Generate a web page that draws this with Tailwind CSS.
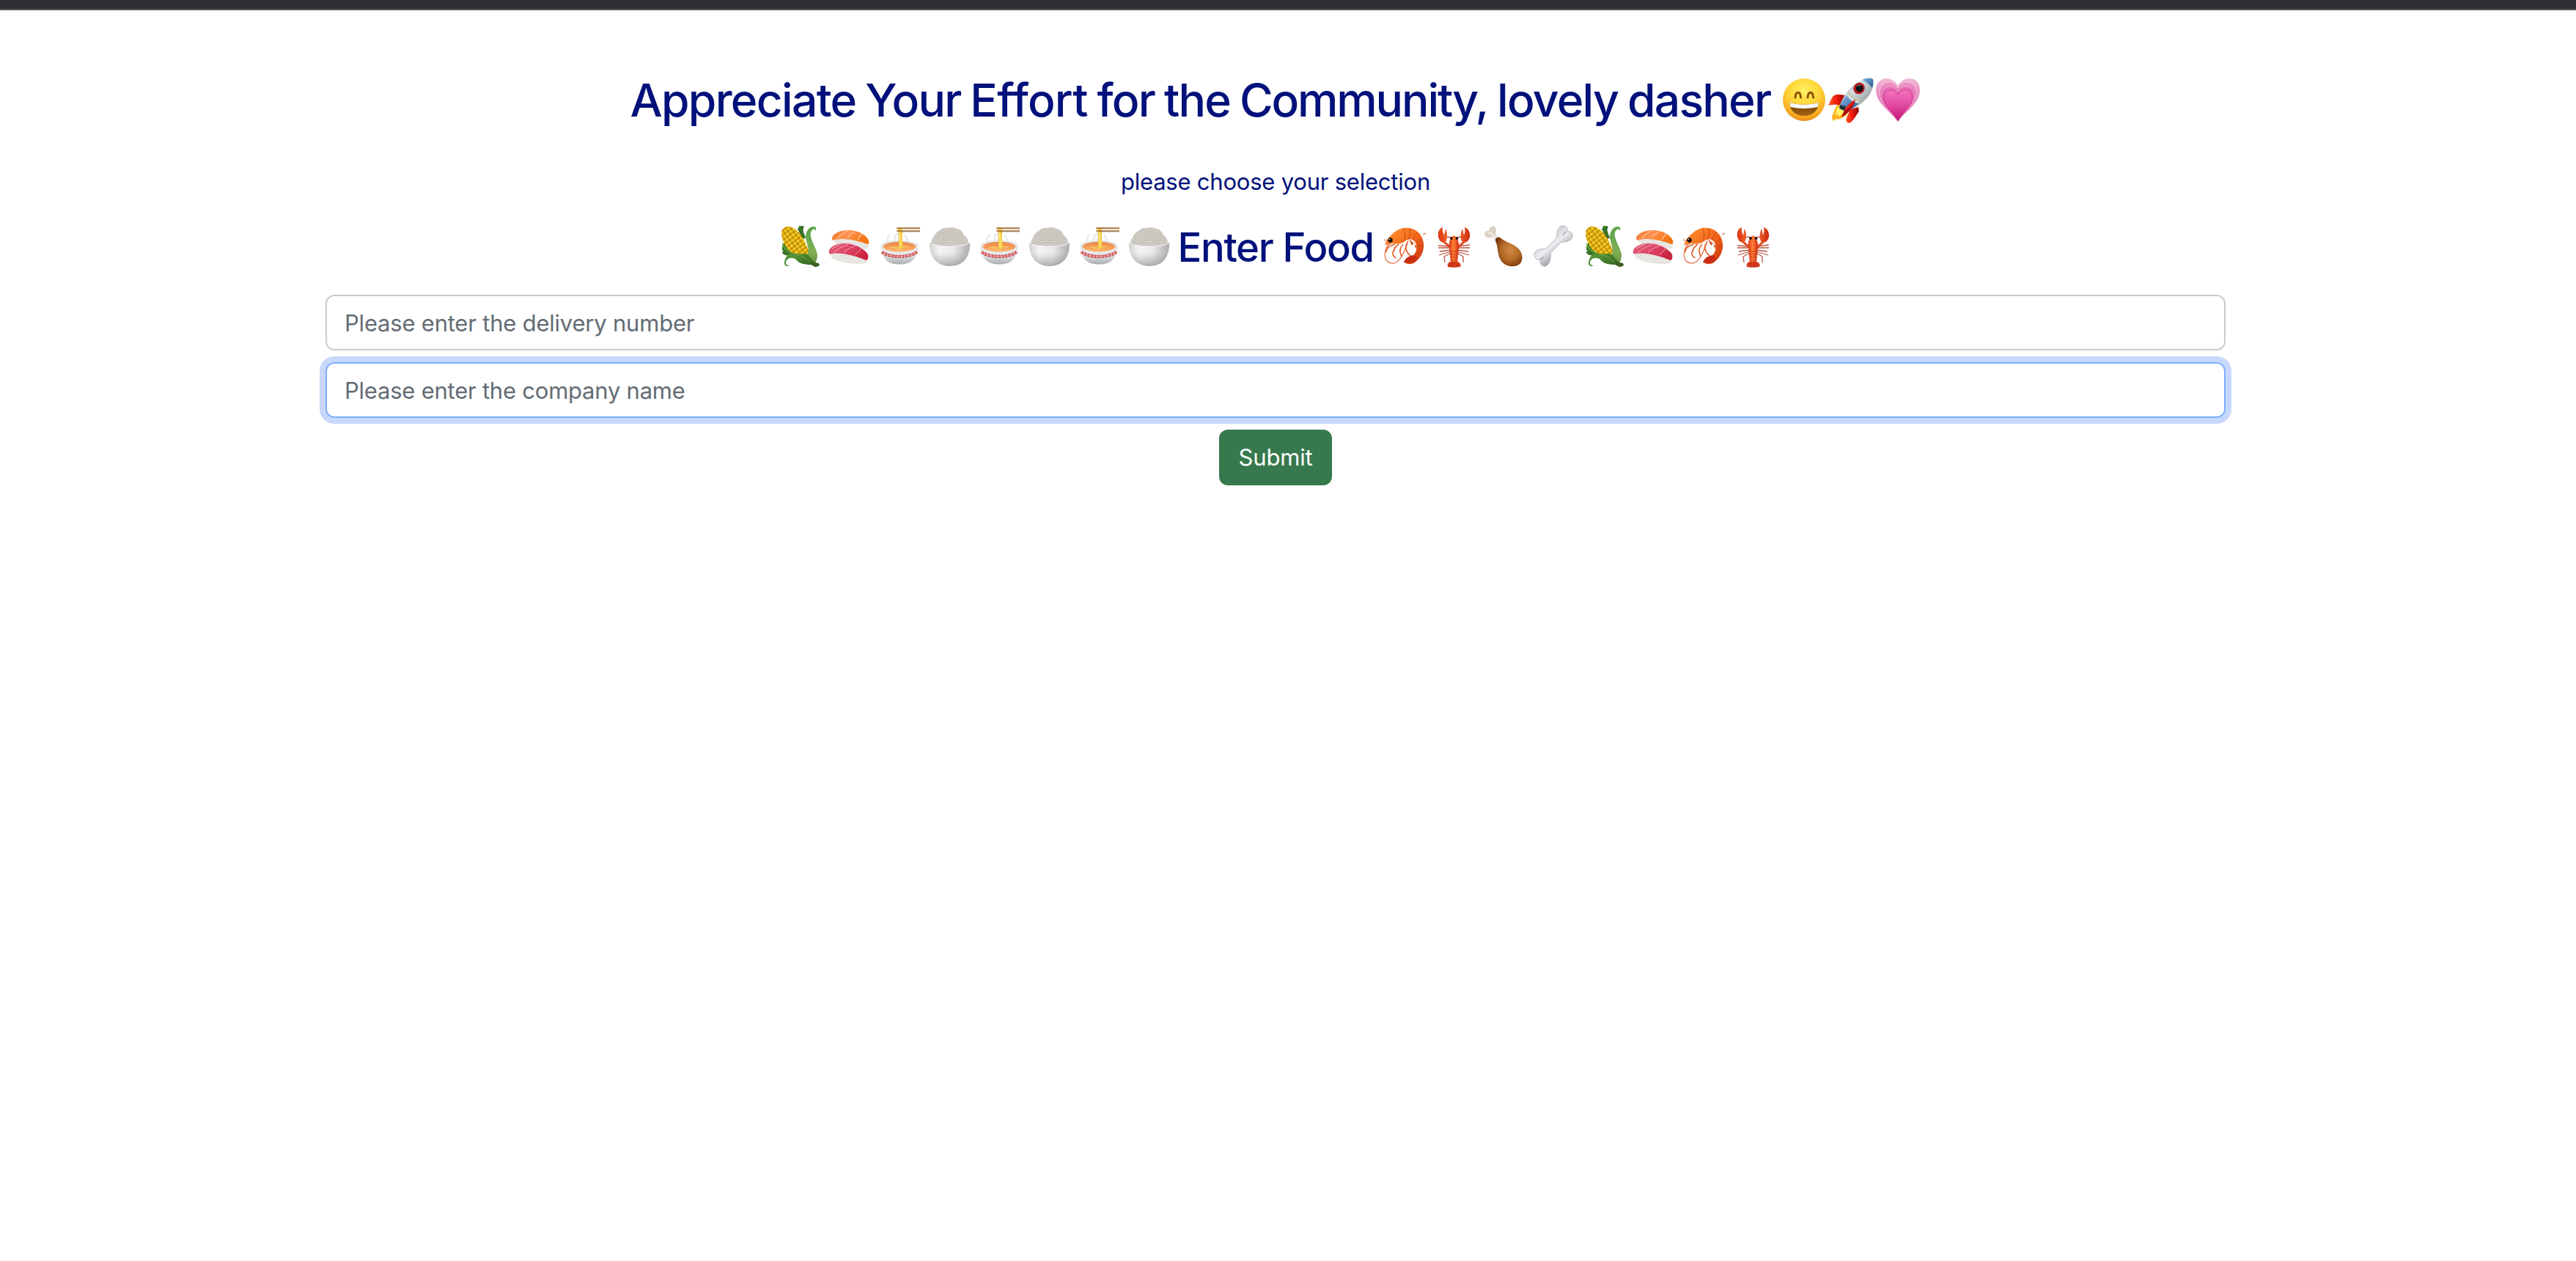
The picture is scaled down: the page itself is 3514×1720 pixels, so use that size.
<!DOCTYPE html>
<html lang="en">
<head>
<meta charset="utf-8">
<title>Enter Food</title>
<script src="https://cdn.jsdelivr.net/npm/@tailwindcss/browser@4"></script>
</head>
<body class="bg-white font-[Inter,sans-serif] text-[#00117b]">
<svg class="absolute size-0" aria-hidden="true">
  <defs>
    <radialGradient id="face" cx=".5" cy=".3" r=".72"><stop offset="0" stop-color="#fff060"/><stop offset=".45" stop-color="#ffd73c"/><stop offset=".8" stop-color="#fcb027"/><stop offset="1" stop-color="#e58412"/></radialGradient>
    <linearGradient id="mouth" x2="0" y2="1"><stop offset="0" stop-color="#6b3b06"/><stop offset="1" stop-color="#a8640f"/></linearGradient>
    <linearGradient id="hull" x1="0" y1="0" x2="1" y2="1"><stop offset="0" stop-color="#6c8fae"/><stop offset=".38" stop-color="#d5dde0"/><stop offset=".65" stop-color="#a9b3b5"/><stop offset="1" stop-color="#5e6768"/></linearGradient>
    <linearGradient id="blue" x2="1" y2="1"><stop offset="0" stop-color="#86b8e6"/><stop offset="1" stop-color="#1f5589"/></linearGradient>
    <linearGradient id="fin" x2="1" y2="0"><stop offset="0" stop-color="#ff5a1e"/><stop offset=".5" stop-color="#f0160c"/><stop offset="1" stop-color="#7a0a08"/></linearGradient>
    <linearGradient id="h1" x2="0" y2="1"><stop offset="0" stop-color="#f0b9d8"/><stop offset="1" stop-color="#d64e9b"/></linearGradient>
    <linearGradient id="h2" x2="0" y2="1"><stop offset="0" stop-color="#ec94c6"/><stop offset="1" stop-color="#cc2f86"/></linearGradient>
    <linearGradient id="h3" x2="0" y2="1"><stop offset="0" stop-color="#e670b4"/><stop offset="1" stop-color="#c21c7b"/></linearGradient>
    <linearGradient id="h4" x2="0" y2="1"><stop offset="0" stop-color="#f573bf"/><stop offset=".6" stop-color="#dd3f98"/><stop offset="1" stop-color="#bb1270"/></linearGradient>
    <pattern id="kern" width="5.4" height="5.4" patternUnits="userSpaceOnUse" patternTransform="rotate(-38)"><rect width="5.4" height="5.4" fill="#b98603"/><ellipse cx="2.7" cy="2.7" rx="2.6" ry="2.5" fill="#e2b010"/><ellipse cx="2.2" cy="2.1" rx="1.5" ry="1.3" fill="#f8da3c"/></pattern>
    <linearGradient id="leaf" x2="1" y2="1"><stop offset="0" stop-color="#63a344"/><stop offset=".5" stop-color="#4f8c33"/><stop offset="1" stop-color="#2b5618"/></linearGradient>
    <linearGradient id="leaf2" x2="0" y2="1"><stop offset="0" stop-color="#5ca54c"/><stop offset=".7" stop-color="#7fae55"/><stop offset="1" stop-color="#5d8433"/></linearGradient>
    <linearGradient id="salmon" x2="1" y2=".4"><stop offset="0" stop-color="#f0742a"/><stop offset=".45" stop-color="#ff9350"/><stop offset="1" stop-color="#f57413"/></linearGradient>
    <linearGradient id="tuna" x2="1" y2=".5"><stop offset="0" stop-color="#dc6078"/><stop offset=".5" stop-color="#e0466a"/><stop offset="1" stop-color="#c9243f"/></linearGradient>
    <pattern id="grain" width="5" height="4.4" patternUnits="userSpaceOnUse"><rect width="5" height="4.4" fill="#dedcd7"/><path d="M.4 1.6 2 .6M2.8 1 4.6 2M.6 3.4l1.8.4M3.2 3.6l1.2-1" stroke="#f7f6f2" stroke-width="1" stroke-linecap="round"/><path d="M1.4 2.5l1.1.2M4 3.9l.8-.5" stroke="#bdb9b2" stroke-width=".6"/></pattern>
    <pattern id="heap" width="5" height="4.4" patternUnits="userSpaceOnUse"><rect width="5" height="4.4" fill="#bfbab2"/><path d="M.4 1.6 2 .6M2.8 1 4.6 2M.6 3.4l1.8.4M3.2 3.6l1.2-1" stroke="#e6e3dd" stroke-width=".9" stroke-linecap="round"/><path d="M1.4 2.5l1.1.2M4 3.9l.8-.5" stroke="#958f86" stroke-width=".6"/></pattern>
    <linearGradient id="bowl" x2="1" y2="0"><stop offset="0" stop-color="#cfcfcf"/><stop offset=".25" stop-color="#f4f4f4"/><stop offset=".6" stop-color="#e8e8e8"/><stop offset="1" stop-color="#ababab"/></linearGradient>
    <linearGradient id="shade" x2="0" y2="1"><stop offset=".45" stop-color="#888" stop-opacity="0"/><stop offset="1" stop-color="#777" stop-opacity=".55"/></linearGradient>
    <linearGradient id="soup" x2="0" y2="1"><stop offset="0" stop-color="#e98648"/><stop offset="1" stop-color="#ffb46a"/></linearGradient>
    <linearGradient id="shell" x2="1" y2="1"><stop offset="0" stop-color="#ff9a32"/><stop offset=".5" stop-color="#f4681d"/><stop offset="1" stop-color="#c92f10"/></linearGradient>
    <linearGradient id="lob" x2="1" y2="0"><stop offset="0" stop-color="#d93413"/><stop offset=".45" stop-color="#ff8037"/><stop offset="1" stop-color="#d02c11"/></linearGradient>
    <radialGradient id="meat" cx=".55" cy=".45" r=".6"><stop offset="0" stop-color="#d08a45"/><stop offset=".55" stop-color="#b56a28"/><stop offset="1" stop-color="#7d3c0c"/></radialGradient>
    <linearGradient id="bone" x1=".1" y1="0" x2=".9" y2="1"><stop offset=".2" stop-color="#bfc1c5"/><stop offset=".48" stop-color="#ecedf0"/><stop offset=".8" stop-color="#84868a"/></linearGradient>
  </defs>
  <symbol id="smile" viewBox="0 0 64 64">
    <circle cx="32" cy="31" r="29" fill="url(#face)"/>
    <path d="M20 28c.5-9 7-9 7.500 0M37 28c.5-9 7-9 7.500 0" fill="none" stroke="#8a5206" stroke-width="3" stroke-linecap="round"/>
    <path d="M12.500 35q19.500 5.500 39 0c.5 10-7 18-19.500 18S12 45 12.500 35z" fill="url(#mouth)"/>
    <path d="M12.500 35q19.500 5.500 39 0 0 3-1 6-18.500 4-37 0-1-3-1-6z" fill="#f6f8fa"/>
  </symbol>
  <symbol id="rocket" viewBox="0 0 64 64">
    <path d="M10 44c2-7 9-9 14-6l4 8c0 8-9 10-14 12l-2-1-4 3 0-5-2 6 0-7z" fill="#ffb01e"/>
    <path d="M13 42l4-2 1 5 6-3-2 6-6 6-3-4-3 3z" fill="#fff36a"/>
    <path d="M25 25c-8-1-14-2-17 1-3 3-5 9-7 13 6-2 13-1 18-1z" fill="url(#fin)"/>
    <path d="M42 41c1 3 0 5 1 6-4 5-7 12-13 16-4-1-4-2-5-5l6-14z" fill="url(#fin)"/>
    <path d="M62 3C45-1 25 16 17 38q3 8 8 9C50 38 66 20 62 3z" fill="url(#hull)"/>
    <path d="M47 4c6-3 12-3 15-1 1 4 0 8-1 12-4-5-8-9-14-11z" fill="url(#blue)"/>
    <path d="M29 20q6 10 16 12l-3 4q-11-3-16-11z" fill="#d5dce0"/><path d="M26 25q5 9 16 11-8 9-17 11-6-2-8-9 4-8 9-13z" fill="url(#blue)"/>
    <path d="M28 20q7 12 17 13" fill="none" stroke="#c2a151" stroke-width="1"/>
    <path d="M38 31c-8 4-15 12-19 24 9-5 16-12 19-24z" fill="#a80d0b"/><path d="M37 32c-7 4-12 8-15 15 6-4 12-8 15-15z" fill="#ee231c"/>
    <path d="M17 38l8 2-2 6-7-3z" fill="#23343d"/>
    <ellipse cx="43" cy="15.500" rx="7.500" ry="8" transform="rotate(40 43 15.500)" fill="#b9181c"/><circle cx="43.500" cy="15.500" r="5" fill="#0c1319"/><path d="M40 13q3-3 6-1" stroke="#51606b" stroke-width="1.200" fill="none"/>
  </symbol>
  <symbol id="heart" viewBox="0 0 64 64">
    <path d="M32 61C24 49 2 36 2 18 2 8 8 2 16 2c7 0 13 4 16 10C35 6 41 2 48 2c8 0 14 6 14 16 0 18-22 31-30 43z" fill="url(#h1)"/>
    <path d="M32 61C25 49 7 38 7 22 7 13 12 7 19 7c6 0 10 3 13 8 3-5 7-8 13-8 7 0 12 6 12 15 0 16-18 27-25 39z" fill="url(#h2)" stroke="#fbd3e9" stroke-width=".7"/>
    <path d="M32 61C26 50 10 39 10 26c0-8 5-13 11-13 5 0 9 3 11 7 2-4 6-7 11-7 6 0 11 5 11 13 0 13-16 24-22 35z" fill="url(#h3)" stroke="#f9bfe0" stroke-width=".6"/>
    <path d="M32 60C27 50 13 41 13 29c0-7 4-11 9-11 5 0 8 3 10 7 2-4 5-7 10-7 5 0 9 4 9 11 0 12-14 21-19 31z" fill="url(#h4)" stroke="#d83b98" stroke-width=".7"/>
  </symbol>
  <symbol id="corn" viewBox="0 0 60 60">
    <path d="M27 6c5-4 6-3 9-3-3 4-1 8 2 15l-4 2z" fill="#2d631d"/><path d="M9 24c-4 8-4 10-1 13-4 0-2 3 2 5l15 2z" fill="#3a7325"/>
    <path d="M5 11C6 3 15 1 21 5c10 5 16 16 23 36l-4 8-11-2C18 40 5 28 5 11z" fill="url(#kern)"/>
    <path d="M28 3c3-2 7-1 9 1-1-1-4-1-5 1 0 5 4 8 6 15-4-4-8-10-10-17z" fill="#3b7c2a"/>
    <path d="M38 18C38 9 43 3 49 3c4 0 4 4 2 6 0-4-4-3-6 2-2 8 8 22 9 30 0 7-2 10-4 13-5-5-7-8-9-14 2-9-2-15-3-22z" fill="url(#leaf2)"/>
    <path d="M6 24c2 7 8 12 17 16 9 1 13-1 18 1 3 5 8 11 14 12l1 4-5 1-6-3c-10 0-17-2-21-8-6-2-12-1-13 5 0 3 2 4 5 4-3 2-7 1-7-3 0-7 5-13 9-13-7-3-13-8-12-16z" fill="url(#leaf)"/>
    <path d="M24 41c8 1 15 5 21 12M42 24c5 11 9 18 8 27" fill="none" stroke="#8bb860" stroke-width=".6"/>
    <path d="M45 52l11 1 1 3-6 2z" fill="#3f5e20"/>
  </symbol>
  <symbol id="sushi" viewBox="0 0 60 60">
    <path d="M8 19c10-3 38 3 48 7 1 5-2 8-7 8l-31-5-9-5z" fill="url(#grain)"/>
    <path d="M6 18c2-6 12-10 22-10 15 0 25 7 28 14 1 4 0 5-2 5-13-5-30-9-44-6-3 1-5 0-4-3z" fill="url(#salmon)"/>
    <path d="M14 18q6-6 13-9M27 18q4-5 10-8M41 21q2-4 6-8" stroke="#ffc697" stroke-width="1.200" fill="none"/>
    <path d="M3 38c12-3 42 3 52 9-1 5-4 7-9 7-12 0-26-1-36-6-5-2-7-6-7-10z" fill="url(#grain)"/>
    <path d="M2 36c1-6 11-10 20-10 16 0 29 8 33 15 1 4 0 8-3 8C38 43 20 38 6 40c-4 1-5-1-4-4z" fill="url(#tuna)"/>
    <path d="M8 38q8-6 20-11M22 38q7-6 16-9M37 42q5-4 9-9M6 33q8-4 12-6" stroke="#f6a5b2" stroke-width="1" fill="none"/>
  </symbol>
  <symbol id="ramen" viewBox="0 0 60 60">
    <path d="M15 26c-3-5-1-9 2-12M25 24c-3-5-2-10 2-11 3 1 1 7 2 10M41 24c-1-4-1-7-4-9" stroke="#dedede" stroke-width="2.400" fill="none" opacity=".65"/>
    <path d="M4 29c3-10 49-10 52 0-.3 14-8 22-15 24q-11 3-22 0C12 51 4.500 43 4 29z" fill="#e6e9ec"/>
    <path d="M4 29c9 14 43 14 52 0-.3 14-8 22-15 24q-11 3-22 0C12 51 4.500 43 4 29z" fill="url(#shade)"/>
    <path d="M6 37.500c10 8.500 38 8.500 48 0" stroke="#d0454a" stroke-width="4.200" stroke-dasharray="3.800 .9" fill="none"/>
    <path d="M6 37.500c10 8.500 38 8.500 48 0" stroke="#eed0ce" stroke-width="1.300" stroke-dasharray="2 1.500" fill="none"/>
    <ellipse cx="30" cy="30.500" rx="22.500" ry="6.800" fill="url(#soup)"/>
    <path d="M16 33q4-3 8 0t10-1 9 1M21 30q5 3 14 0" stroke="#f7cf65" stroke-width="1.200" fill="none"/>
    <path d="M28 5h6c-1 4 1 7 0 11s2 8 0 17h-5c1-6-1-9 0-14s-2-9-1-14z" fill="#f7cb43"/><path d="M31 6q-1 6 0 12t0 13" stroke="#fff09a" stroke-width="1.200" fill="none"/>
    <path d="M26 5h32M26 9h32" stroke="#a9712f" stroke-width="1.700"/><path d="M28 6h30M29 10h29" stroke="#68401a" stroke-width=".5"/>
  </symbol>
  <symbol id="rice" viewBox="0 0 60 60">
    <path d="M5 27c0-4 1-7 3-8 1-6 6-9 9-11 3-3 7-4 11-3 5-2 9-1 12 1 6 1 9 5 10 9 4 2 6 6 6 12-7 6-44 7-51 0z" fill="url(#heap)"/>
    <path d="M3 24c3 8 52 8 55 0C59 43 50 57 31 57S2 43 3 24z" fill="url(#bowl)"/>
    <path d="M3 24c3 8 52 8 55 0C59 43 50 57 31 57S2 43 3 24z" fill="url(#shade)"/>
    <path d="M3 24.500c4 7.500 51 7.500 55 0" stroke="#fff" stroke-width=".8" fill="none"/>
  </symbol>
  <symbol id="shrimp" viewBox="0 0 60 60">
    <path d="M10 26C0 36 1 52 13 53c11 1 17-16 22-31" stroke="#e7683d" stroke-width="1.200" fill="none"/>
    <path d="M17 27q-12 3-12 11M22 27q-8 6-8 14 1 3 4 5M28 27q-7 7-2 17M34 25q-6 9 4 18" stroke="#e05a22" stroke-width="1.600" fill="none"/>
    <path d="M36 20l4 9 3-4 2 8 2-6 3 6z" fill="#cf4718"/>
    <path d="M3 27c4-8 12-19 25-22C41 3 54 10 56 26c1 11-4 20-12 26-4 3-12 3-15-1 4-5 8-8 13-9 5-4 5-13 3-17-3-5-8-6-13-3-6 5-11 5-18 4z" fill="url(#shell)"/>
    <path d="M28 5q4 8 2 17M38 6q0 8-3 15M47 11q-4 6-6 11M54 20q-5 2-9 5M56 31q-5-2-9-1M51 43q-3-4-6-5" stroke="#c3480f" stroke-width=".9" fill="none"/>
    <path d="M29 51c4-7 8-8 14-9l5 5q-8 8-19 4z" fill="#c92c15"/><path d="M55 14l4-2M2 21l8 2M4 28l8-2" stroke="#e4693a" stroke-width="1.200"/>
    <circle cx="10.500" cy="21.500" r="3.200" fill="#17100c"/><circle cx="9.500" cy="20.500" r=".8" fill="#fff"/>
  </symbol>
  <symbol id="lobster" viewBox="0 0 60 60">
    <path d="M25 19q-1-3-6-1l-3 5M34 19q1-3 6-1l4 5M24 32H8M25 35l-15 2M25 37l-16 5M25 39l-9 5 1 8M35 32h16M34 35l15 2M34 37l16 5M34 39l8 5 0 8M24 30L8 29M35 30l16-2" stroke="#b9553f" stroke-width="1.300" fill="none"/>
    <path d="M25 32l-9-8-3-5M34 32l9-8 3-5" stroke="#e2451c" stroke-width="3" fill="none"/>
    <path d="M14 4c-5 1-7 8-6 13 1 5 4 8 9 8 4-4 4-12 1-19-1 2-1 6-2 9-1-3-3-6-2-11zM44 4c5 1 8 8 7 13-1 5-4 8-9 8-5-4-4-12-1-19 1 2 1 6 2 9 1-3 2-6 1-11z" fill="url(#lob)"/>
    <path d="M29.500 15c5 3 7 9 6.500 17-1 8-1 13-2 20h-9c-1-7-1-12-2-20-1-8 1-14 6.500-17z" fill="url(#lob)"/>
    <path d="M24 37h11M24 41h11M25 45h9M25 49h9" stroke="#bd3e15" stroke-width=".9"/>
    <path d="M25 51h9c5 1 5 5 4 7-5 1-13 1-17 0-1-3 0-6 4-7z" fill="#d53919"/><path d="M27 52l-2 6M32 52l2 6" stroke="#a72310" stroke-width=".7"/>
    <circle cx="26" cy="19" r="1.900" fill="#24150f"/><circle cx="33.500" cy="19" r="1.900" fill="#24150f"/>
  </symbol>
  <symbol id="chicken" viewBox="0 0 60 60">
    <path d="M20 23l-6-6c-4 3-11 1-11-4 0-3 3-5 6-4 0-8 9-9 10-2 0 3-1 5-1 7l6 5z" fill="#dcd3c7"/><path d="M8 12q3-2 6 2l7 7" stroke="#f6f1e9" stroke-width="2" fill="none"/>
    <path d="M18 20q3-3 6-2c8 7 20 8 27 17 6 9 4 18-3 21-7 3-17 1-22-6-6-8-4-20-8-27z" fill="url(#meat)"/>
    <path d="M18 20q3-3 6-2l1 1q-4 1-6 4z" fill="#75360b"/>
  </symbol>
  <symbol id="bonep" viewBox="0 0 60 60">
    <path d="M34 18c-1-6 1-16 8-16 5 0 7 4 6 8 6-1 8 3 7 7-1 5-9 8-15 7L25 39c1 6 0 14-6 18-6 1-9-3-8-9-6 1-9-4-8-8 2-6 10-7 15-6z" fill="url(#bone)" stroke="#a9abaf" stroke-width=".8"/>
    <path d="M47 10q-3 1-5 5M11 48q3-1 5-4" stroke="#96989d" stroke-width="1.200" fill="none"/>
  </symbol>
</svg>

<div class="h-3.5 border-b-2 border-[#545356] bg-[#2f2e33]"></div>

<main class="flex w-[3480px] flex-col items-center pt-[85px]">
  <h1 class="flex h-[76px] items-center text-[62.4px] leading-[76px] font-medium">
    <span class="w-[1569px] whitespace-nowrap tracking-[-1.74px] [word-spacing:-2.150px]">Appreciate Your <span class="tracking-[-0.74px]">Effort</span> for the <span class="tracking-[-2.14px]">Community,</span> lovely dasher</span>
    <svg class="size-16"><use href="#smile"/></svg><svg class="size-16"><use href="#rocket"/></svg><svg class="size-16"><use href="#heart"/></svg>
  </h1>

  <p class="mt-[49px] text-[31px] leading-[48px] tracking-[-0.22px]">please choose your selection</p>

  <h2 class="mt-[31px] flex h-[68px] items-start pl-[2px] text-[54.4px] leading-[68px] font-medium">
    <span class="mt-[3px] flex gap-2">
      <svg class="size-15"><use href="#corn"/></svg><svg class="size-15"><use href="#sushi"/></svg><svg class="size-15"><use href="#ramen"/></svg><svg class="size-15"><use href="#rice"/></svg><svg class="size-15"><use href="#ramen"/></svg><svg class="size-15"><use href="#rice"/></svg><svg class="size-15"><use href="#ramen"/></svg><svg class="size-15"><use href="#rice"/></svg>
    </span>
    <span class="w-[290px] pl-[10px] whitespace-nowrap tracking-[-1.31px]">Enter Food</span>
    <span class="mt-[3px] -ml-px flex gap-2">
      <svg class="size-15"><use href="#shrimp"/></svg><svg class="size-15"><use href="#lobster"/></svg><svg class="size-15"><use href="#chicken"/></svg><svg class="size-15"><use href="#bonep"/></svg><svg class="size-15"><use href="#corn"/></svg><svg class="size-15"><use href="#sushi"/></svg><svg class="size-15"><use href="#shrimp"/></svg><svg class="size-15"><use href="#lobster"/></svg>
    </span>
  </h2>

  <form class="mt-[31px] flex w-[2592px] flex-col items-center gap-4 text-[31px]">
    <input type="text" placeholder="Please enter the delivery number" class="h-[76px] w-full rounded-xl border-2 border-[#c8cdd3] px-6 tracking-[-0.21px] outline-none placeholder:text-[#636c74]">
    <input type="text" placeholder="Please enter the company name" class="h-[76px] w-full rounded-xl border-2 border-[#7eaefb] px-6 tracking-[-0.23px] ring-8 ring-[#c8d8fd] outline-none placeholder:text-[#636c74]">
    <button type="button" class="h-[76px] w-[154px] rounded-xl bg-[#37794e] tracking-[-0.18px] text-white">Submit</button>
  </form>
</main>
</body>
</html>
